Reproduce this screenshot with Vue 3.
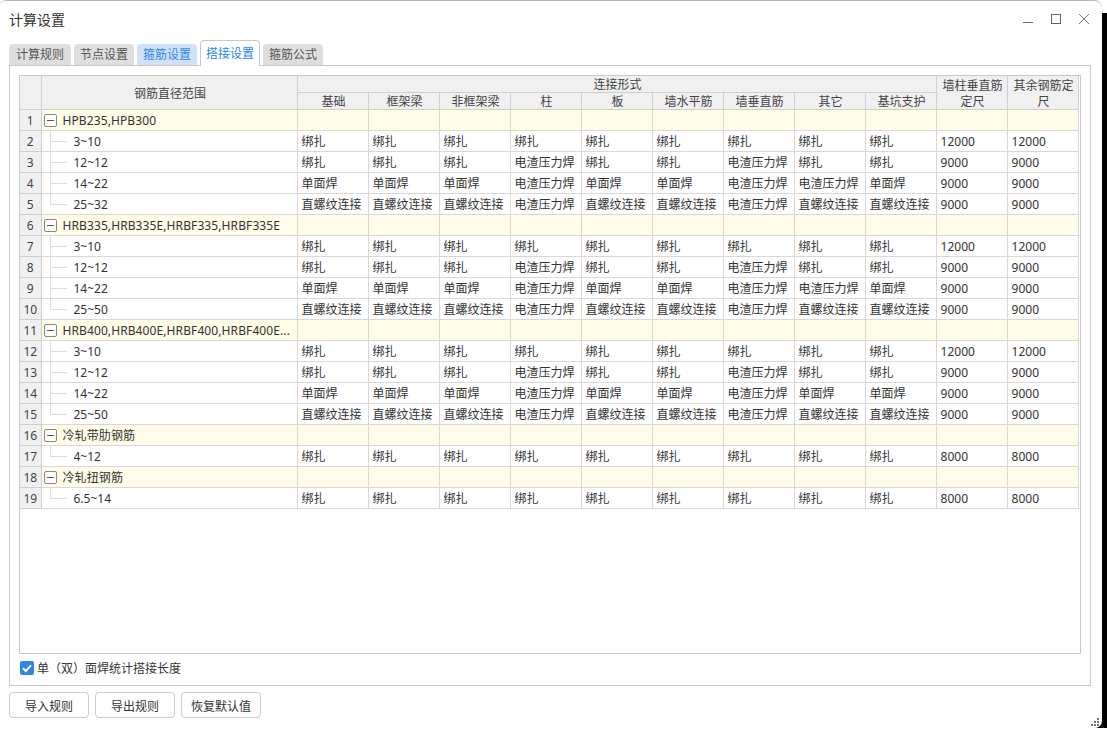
<template>
  <div class="screen">
    <div class="shadow"></div>
    <div class="window">
      <div class="titlebar">
        <span class="title">计算设置</span>
        <div class="win-actions">
          <svg width="12" height="12" viewBox="0 0 12 12"><path d="M1 9.5h10" stroke="#666" fill="none" /></svg>
          <svg width="12" height="12" viewBox="0 0 12 12"><rect x="1.5" y="1.5" width="9" height="9" stroke="#666" fill="none" /></svg>
          <svg width="12" height="12" viewBox="0 0 12 12"><path d="M1 1l10 10M11 1L1 11" stroke="#777" fill="none" /></svg>
        </div>
      </div>

      <div class="tabs">
        <div v-for="t in tabs" :key="t.name" class="tab" :class="t.cls">{{ t.name }}</div>
      </div>

      <div class="panel">
        <div class="grid-wrap">
          <table class="grid">
            <colgroup>
              <col class="c-num" />
              <col class="c-range" />
              <col v-for="n in 11" :key="n" class="c-val" />
            </colgroup>
            <thead>
              <tr>
                <th rowspan="2"></th>
                <th rowspan="2">钢筋直径范围</th>
                <th colspan="9">连接形式</th>
                <th rowspan="2" class="wrap">墙柱垂直筋定尺</th>
                <th rowspan="2" class="wrap">其余钢筋定尺</th>
              </tr>
              <tr>
                <th v-for="h in subHeads" :key="h">{{ h }}</th>
              </tr>
            </thead>
            <tbody>
              <tr v-for="(r, i) in rows" :key="i" :class="{ group: r.group }">
                <td class="num">{{ i + 1 }}</td>
                <td class="range">
                  <div v-if="r.group" class="group-name">
                    <span class="toggle"></span>
                    <span class="gname">{{ r.group }}</span>
                  </div>
                  <div v-else class="leaf" :class="{ last: r.last }">{{ r.range }}</div>
                </td>
                <template v-if="r.group">
                  <td v-for="n in 11" :key="n"></td>
                </template>
                <template v-else>
                  <td v-for="(v, k) in r.vals" :key="k">{{ v }}</td>
                </template>
              </tr>
            </tbody>
          </table>
        </div>
        <label class="check-row">
          <span class="check">
            <svg width="14" height="14" viewBox="0 0 14 14"><path d="M3 7.2l2.8 2.8L11 4.3" stroke="#fff" stroke-width="2" fill="none" /></svg>
          </span>
          单（双）面焊统计搭接长度
        </label>
      </div>

      <div class="footer">
        <button class="btn">导入规则</button>
        <button class="btn">导出规则</button>
        <button class="btn">恢复默认值</button>
      </div>

      <svg class="grip" width="9" height="9" viewBox="0 0 9 9" fill="#6f7780">
        <rect x="6" y="0" width="2" height="2" />
        <rect x="3" y="3" width="2" height="2" /><rect x="6" y="3" width="2" height="2" />
        <rect x="0" y="6" width="2" height="2" /><rect x="3" y="6" width="2" height="2" /><rect x="6" y="6" width="2" height="2" />
      </svg>
    </div>
  </div>
</template>

<script setup>
const tabs = [
  { name: '计算规则', cls: '' },
  { name: '节点设置', cls: '' },
  { name: '箍筋设置', cls: 'hover' },
  { name: '搭接设置', cls: 'active' },
  { name: '箍筋公式', cls: '' }
]
const subHeads = ['基础', '框架梁', '非框架梁', '柱', '板', '墙水平筋', '墙垂直筋', '其它', '基坑支护']

const B = '绑扎', D = '单面焊', Z = '直螺纹连接', E = '电渣压力焊'
const leaf = (range, vals, a, b, last) => ({ range, vals: [...vals, a, b], last })
const allB = [B, B, B, B, B, B, B, B, B]
const r12 = [B, B, B, E, B, B, E, B, B]
const r14 = [D, D, D, E, D, D, E, E, D]
const r14b = [D, D, D, E, D, D, E, D, D]
const r25 = [Z, Z, Z, E, Z, Z, E, Z, Z]

const rows = [
  { group: 'HPB235,HPB300' },
  leaf('3~10', allB, 12000, 12000),
  leaf('12~12', r12, 9000, 9000),
  leaf('14~22', r14, 9000, 9000),
  leaf('25~32', r25, 9000, 9000, true),
  { group: 'HRB335,HRB335E,HRBF335,HRBF335E' },
  leaf('3~10', allB, 12000, 12000),
  leaf('12~12', r12, 9000, 9000),
  leaf('14~22', r14, 9000, 9000),
  leaf('25~50', r25, 9000, 9000, true),
  { group: 'HRB400,HRB400E,HRBF400,HRBF400E...' },
  leaf('3~10', allB, 12000, 12000),
  leaf('12~12', r12, 9000, 9000),
  leaf('14~22', r14b, 9000, 9000),
  leaf('25~50', r25, 9000, 9000, true),
  { group: '冷轧带肋钢筋' },
  leaf('4~12', allB, 8000, 8000, true),
  { group: '冷轧扭钢筋' },
  leaf('6.5~14', allB, 8000, 8000, true)
]
</script>

<style>
html, body { margin: 0; background: #fff; }
</style>

<style scoped>
.screen { position: relative; width: 1107px; height: 729px; overflow: hidden; background: #fff; font-family: "Noto Sans", "Noto Sans CJK SC", sans-serif; font-size: 12px; color: #333; }
.shadow { position: absolute; right: 0; top: 13px; width: 20px; height: 715px; background: #000; }
.window { position: relative; box-sizing: border-box; width: 1102px; height: 728px; background: #fff; border-top: 1px solid #b4b4b4; border-radius: 6px 8px 7px 0; padding: 0 10px 0 9px; display: flex; flex-direction: column; }
.titlebar { height: 38px; display: flex; align-items: center; justify-content: space-between; flex-shrink: 0; }
.title { font-size: 14px; color: #333; margin-top: -2px; }
.win-actions { display: flex; gap: 16px; margin-right: 2px; margin-top: -2px; }
.tabs { display: flex; align-items: flex-end; gap: 3px; height: 26px; flex-shrink: 0; position: relative; z-index: 1; }
.tab { box-sizing: border-box; width: 60px; height: 21px; line-height: 21px; text-align: center; background: #dedede; color: #555; border-radius: 4px 4px 0 0; font-size: 12px; }
.tab:first-child { width: 62px; }
.tab.hover { background: #cfe2f8; color: #2f86e8; }
.tab.active { background: #fff; color: #1e88e5; border: 1px solid #c8c8c8; border-bottom: none; margin-bottom: -1px; height: 26px; line-height: 25px; }
.panel { box-sizing: border-box; width: 1082px; height: 621px; border: 1px solid #c8c8c8; padding: 9px 9px 0; flex-shrink: 0; display: flex; flex-direction: column; }
.grid-wrap { box-sizing: border-box; height: 579px; border: 1px solid #c8c8c8; flex-shrink: 0; }
.grid { border-collapse: collapse; table-layout: fixed; width: 1058px; }
.c-num { width: 21px; }
.c-range { width: 256px; }
.c-val { width: 71px; }
.grid th { background: #f0f0f0; font-weight: 400; height: 16px; padding: 2px 0 0 2px; box-sizing: border-box; border: 1px solid #cfcfcf; border-top: none; text-align: center; font-size: 12px; line-height: 14px; color: #444; }
.grid th:first-child, .grid td:first-child { border-left: none; }
.grid th.wrap { line-height: 15.5px; padding: 2px 1px 0 3px; }
.grid td { box-sizing: border-box; height: 21px; padding: 2px 3px 0 4px; border: 1px solid #d8d8d8; white-space: nowrap; overflow: hidden; font-size: 12px; line-height: 18px; }
.grid td.num { background: #f0f0f0; text-align: center; padding: 2px 0 0; border-color: #cfcfcf; font-size: 12px; color: #444; }
.grid td.range { padding: 0; position: relative; overflow: visible; }
tr.group td:not(.num) { background: #fffde8; }
.group-name { display: flex; align-items: center; padding-left: 2px; gap: 6px; height: 20px; }
.gname { white-space: nowrap; letter-spacing: 0.1px; line-height: 18px; padding-top: 2px; }
.toggle { box-sizing: border-box; width: 13px; height: 13px; border: 1px solid #888; border-radius: 2px; flex-shrink: 0; position: relative; background: #fff; }
.toggle::after { content: ""; position: absolute; left: 2px; right: 2px; top: 5px; height: 1px; background: #555; }
.leaf { position: relative; padding: 2px 0 0 32px; box-sizing: border-box; height: 20px; line-height: 18px; }
.leaf::before { content: ""; position: absolute; left: 8px; top: -1px; bottom: -1px; width: 1px; background: #ddd; }
.leaf.last::before { bottom: 9px; }
.leaf::after { content: ""; position: absolute; left: 8px; width: 17px; top: 10px; height: 1px; background: #ddd; }
.check-row { display: flex; align-items: center; height: 27px; gap: 3px; color: #333; margin-left: 1px; }
.check { width: 14px; height: 14px; border-radius: 2px; background: #2f86e8; display: flex; }
.footer { display: flex; gap: 6px; margin-top: 6px; flex-shrink: 0; }
.btn { box-sizing: border-box; width: 80px; height: 26px; background: #fff; border: 1px solid #ccc; border-radius: 4px; padding: 2px 0 0; font: inherit; color: #333; }
.grip { position: absolute; right: 2px; bottom: 1px; }
</style>
